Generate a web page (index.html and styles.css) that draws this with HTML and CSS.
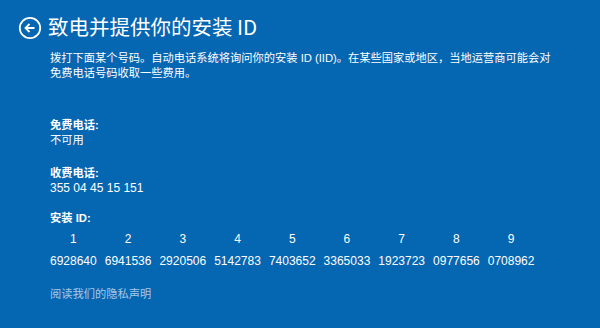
FILE: index.html
```html
<!DOCTYPE html>
<html lang="zh-CN">
<head>
    <meta charset="UTF-8">
    <title>致电并提供你的安装 ID</title>
    <link rel="stylesheet" href="styles.css">
</head>
<body>
    <div class="header">
        <svg class="back" width="24" height="24" viewBox="0 0 24 24">
            <circle cx="12" cy="12" r="10.2" fill="none" stroke="#fff" stroke-width="1.8"/>
            <path d="M16.5 12H7.5M11.5 8L7.5 12L11.5 16" fill="none" stroke="#fff" stroke-width="1.8"/>
        </svg>
        <h1>致电并提供你的安装 ID</h1>
    </div>

    <div class="content">
        <p class="intro">拨打下面某个号码。自动电话系统将询问你的安装 ID (IID)。在某些国家或地区，当地运营商可能会对免费电话号码收取一些费用。</p>

        <div class="field first">
            <div class="label">免费电话:</div>
            <div>不可用</div>
        </div>

        <div class="field">
            <div class="label">收费电话:</div>
            <div class="num">355 04 45 15 151</div>
        </div>

        <div class="field ids-label">
            <div class="label">安装 ID:</div>
        </div>

        <div class="ids">
            <span>1</span><span>2</span><span>3</span><span>4</span><span>5</span><span>6</span><span>7</span><span>8</span><span>9</span>
            <span>6928640</span><span>6941536</span><span>2920506</span><span>5142783</span><span>7403652</span><span>3365033</span><span>1923723</span><span>0977656</span><span>0708962</span>
        </div>

        <a class="privacy" href="#">阅读我们的隐私声明</a>
    </div>
</body>
</html>
```

FILE: styles.css
```css
/* Fond bleu façon écran d'activation */
body {
    margin: 0;
    background: #0566b2;
    color: #fff;
    font-family: "Liberation Sans", "Noto Sans CJK SC", sans-serif;
    font-size: 11.25px;
    line-height: 15px;
}

/* Titre avec bouton retour */
.header {
    display: flex;
    align-items: center;
    gap: 6px;
    padding: 12px 0 0 18px;
    height: 28px;
}

.back {
    display: block;
    margin-top: 3px;
}

h1 {
    margin: 0;
    font-size: 20.5px;
    font-weight: normal;
    line-height: 28px;
    font-family: "Noto Sans CJK SC", sans-serif;
}

.content {
    padding-left: 50px;
}

.intro {
    margin: 11px 0 0;
    width: 510px;
}

.field {
    margin-top: 18px;
}

.field.first {
    margin-top: 37px;
}

.field.ids-label {
    margin-top: 15px;
}

.label {
    font-weight: bold;
}

.num {
    font-size: 12px;
}

/* Grille des blocs de l'ID d'installation */
.ids {
    display: grid;
    grid-template-columns: repeat(9, max-content);
    column-gap: 8px;
    row-gap: 7px;
    margin-top: 6px;
    font-size: 12px;
    text-align: center;
}

.privacy {
    display: block;
    margin-top: 18px;
    color: #a9c8e6;
    text-decoration: none;
}
```
